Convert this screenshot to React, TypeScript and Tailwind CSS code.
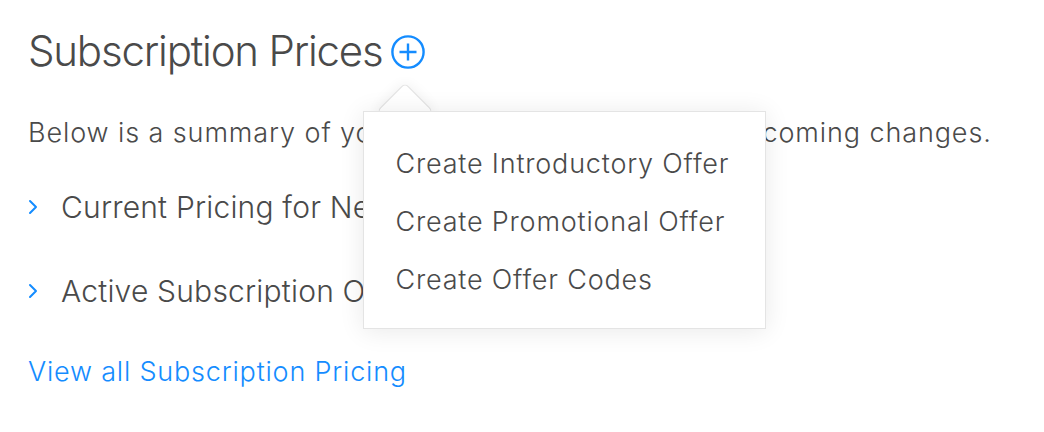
const SECTIONS = ['Current Pricing for New Subscribers', 'Active Subscription Offers']
const MENU = ['Create Introductory Offer', 'Create Promotional Offer', 'Create Offer Codes']

function PlusCircle() {
  return (
    <svg width="36" height="36" viewBox="0 0 36 36" fill="none" stroke="#148cff" strokeWidth="2.4">
      <circle cx="18" cy="18" r="15.6" />
      <path d="M18 9.5v17M9.5 18h17" />
    </svg>
  )
}

function Chevron() {
  return (
    <svg width="10" height="16" viewBox="0 0 10 16" fill="none" stroke="#148cff" strokeWidth="2" strokeLinecap="round" strokeLinejoin="round">
      <path d="M2 2l6 6-6 6" />
    </svg>
  )
}

function OfferMenu() {
  return (
    <div className="absolute left-[-27px] top-[77px] z-10 w-[403px]">
      {/* arrow */}
      <div className="absolute left-[22px] top-[-20px] h-[40px] w-[40px] rotate-45 rounded-[5px] border border-[#e2e2e2] bg-white shadow-[0_0_14px_rgba(0,0,0,0.07)]" />
      <div className="relative border border-[#e4e4e4] bg-white pl-[31px] pt-[23px] pb-[19px] shadow-[0_2px_24px_rgba(0,0,0,0.09)]">
        {/* cover arrow's lower half */}
        <div className="absolute left-[10px] top-0 h-[30px] w-[70px] bg-white" />
        <ul className="relative">
          {MENU.map((label) => (
            <li key={label} className="text-[27px] leading-[58px] font-light tracking-[0.8px] text-[#4a4a4a] whitespace-nowrap">
              {label}
            </li>
          ))}
        </ul>
      </div>
    </div>
  )
}

export default function App() {
  return (
    <div className="min-h-[432px] bg-white px-[28px] pt-[25px] font-['Inter','Liberation_Sans',sans-serif] antialiased">
      {/* Title */}
      <div className="flex items-center">
        <h1 className="text-[42px] leading-[52px] font-light tracking-[-1.2px] text-[#4a4a4a]">Subscription Prices</h1>
        <div className="relative ml-[8px] mt-[2px]">
          <button className="flex items-center">
            <PlusCircle />
          </button>
          <OfferMenu />
        </div>
      </div>

      <p className="mt-[40px] text-[27px] leading-[32px] font-light tracking-[0.9px] text-[#4a4a4a] whitespace-nowrap">
        Below is a summary of your current pricing and any upcoming changes.
      </p>

      <div className="mt-[38px] flex flex-col gap-[44px]">
        {SECTIONS.map((s) => (
          <button key={s} className="flex items-center gap-[23px] text-left">
            <Chevron />
            <span className="text-[30px] leading-[40px] font-light tracking-[0.2px] text-[#4a4a4a] whitespace-nowrap">{s}</span>
          </button>
        ))}
      </div>

      <a className="mt-[45px] block text-[27px] leading-[32px] font-light tracking-[0.8px] text-[#148cff]">
        View all Subscription Pricing
      </a>
    </div>
  )
}
